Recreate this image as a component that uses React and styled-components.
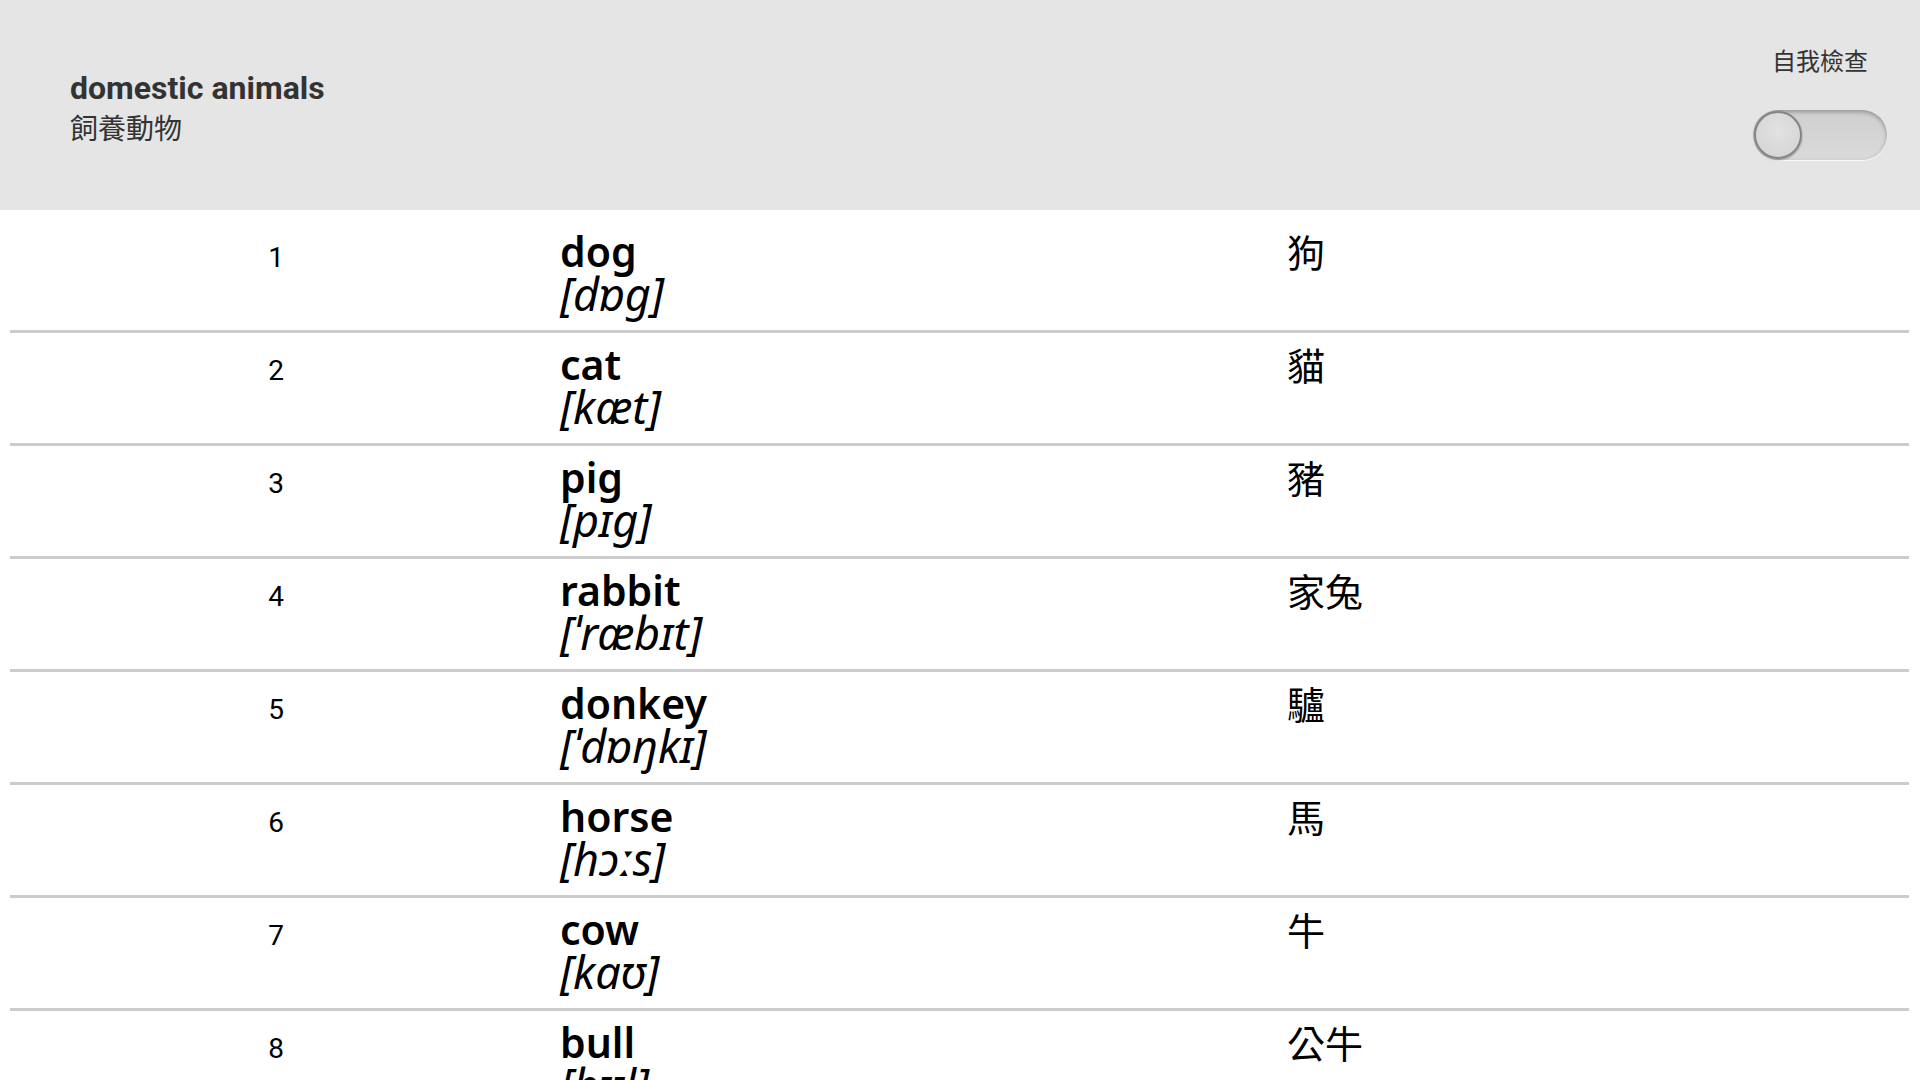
import React from "react";
import styled, { createGlobalStyle } from "styled-components";

const GlobalStyle = createGlobalStyle`
  html, body {
    margin: 0;
    padding: 0;
    background: #ffffff;
  }
  body {
    font-family: "Noto Sans", "Noto Sans CJK TC", sans-serif;
    color: #000;
  }
`;

const Page = styled.div`
  width: 1920px;
  min-height: 1080px;
  overflow: hidden;
`;

const Header = styled.header`
  height: 210px;
  background: #e5e5e5;
  display: flex;
  align-items: center;
  justify-content: space-between;
  padding: 0 33px 0 70px;
  box-sizing: border-box;
`;

const TitleBlock = styled.div`
  display: flex;
  flex-direction: column;
  padding-top: 6px;
  color: #333;
`;

const Title = styled.h1`
  margin: 0;
  font-family: Roboto, "Noto Sans CJK TC", sans-serif;
  font-weight: 700;
  font-size: 32px;
  line-height: 37px;
`;

const Subtitle = styled.div`
  font-family: "Noto Sans CJK TC", sans-serif;
  font-size: 28px;
  line-height: 40px;
`;

const CheckBlock = styled.div`
  display: flex;
  flex-direction: column;
  align-items: center;
  gap: 36px;
  margin-bottom: 4px;
`;

const CheckLabel = styled.div`
  font-family: "Noto Sans CJK TC", sans-serif;
  font-size: 24px;
  line-height: 28px;
  color: #333;
`;

const Track = styled.div`
  width: 134px;
  height: 50px;
  border-radius: 25px;
  background: linear-gradient(#cfcfcf, #dadada);
  box-shadow: inset 0 2px 4px rgba(0, 0, 0, 0.3), 0 1px 1px rgba(255, 255, 255, 0.8);
  display: flex;
  align-items: center;
  padding: 0 1px;
  box-sizing: border-box;
`;

const Knob = styled.div`
  width: 44px;
  height: 44px;
  border-radius: 50%;
  background: radial-gradient(circle at 50% 40%, #e2e2e2, #d2d2d2);
  border: 2px solid #858585;
  box-shadow: 0 1px 2px rgba(0, 0, 0, 0.35);
`;

const List = styled.div`
  margin: 10px 11px 0 10px;
`;

const Row = styled.div`
  display: grid;
  grid-template-columns: 532px 745px 1fr;
  align-items: baseline;
  height: 100px;
  padding-top: 10px;
  border-bottom: 3px solid #cccccc;
`;

const Num = styled.div`
  text-align: center;
  font-family: Roboto, sans-serif;
  font-size: 28px;
`;

const Word = styled.div`
  padding-left: 18px;
  display: flex;
  flex-direction: column;
`;

const English = styled.span`
  font-family: "Noto Sans", sans-serif;
  font-weight: 600;
  font-size: 41px;
  line-height: 42px;
`;

const Phonetic = styled.span`
  font-family: "Noto Sans", "DejaVu Sans", sans-serif;
  font-style: italic;
  font-size: 45px;
  line-height: 44px;
`;

const Chinese = styled.div`
  font-family: "Noto Sans CJK TC", sans-serif;
  font-size: 38px;
  line-height: 42px;
`;

const words = [
  ["dog", "[dɒg]", "狗"],
  ["cat", "[kæt]", "貓"],
  ["pig", "[pɪg]", "豬"],
  ["rabbit", "[ˈræbɪt]", "家兔"],
  ["donkey", "[ˈdɒŋkɪ]", "驢"],
  ["horse", "[hɔːs]", "馬"],
  ["cow", "[kaʊ]", "牛"],
  ["bull", "[bʊl]", "公牛"],
];

export default function App() {
  return (
    <Page>
      <GlobalStyle />
      <Header>
        <TitleBlock>
          <Title>domestic animals</Title>
          <Subtitle>飼養動物</Subtitle>
        </TitleBlock>
        <CheckBlock>
          <CheckLabel>自我檢查</CheckLabel>
          <Track>
            <Knob />
          </Track>
        </CheckBlock>
      </Header>
      <List>
        {words.map(([en, ph, zh], i) => (
          <Row key={en}>
            <Num>{i + 1}</Num>
            <Word>
              <English>{en}</English>
              <Phonetic>{ph}</Phonetic>
            </Word>
            <Chinese>{zh}</Chinese>
          </Row>
        ))}
      </List>
    </Page>
  );
}
